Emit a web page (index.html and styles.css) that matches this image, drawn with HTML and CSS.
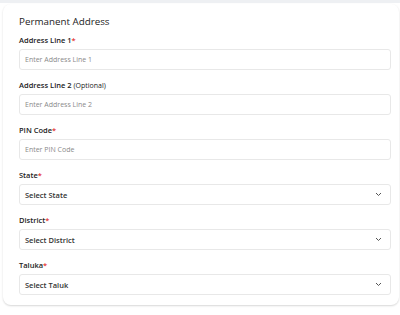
FILE: index.html
```html
<!DOCTYPE html>
<html>
<head>
<meta charset="utf-8">
<link rel="stylesheet" href="styles.css">
</head>
<body>
<div class="topbar"></div>
<div class="card">
  <div class="title">Permanent Address</div>
  <div class="field">
    <label class="label">Address Line 1<span class="req">*</span></label>
    <div class="input"><span class="ph">Enter Address Line 1</span></div>
  </div>
  <div class="field">
    <label class="label">Address Line 2 <span class="opt">(Optional)</span></label>
    <div class="input"><span class="ph">Enter Address Line 2</span></div>
  </div>
  <div class="field">
    <label class="label">PIN Code<span class="req">*</span></label>
    <div class="input"><span class="ph">Enter PIN Code</span></div>
  </div>
  <div class="field">
    <label class="label">State<span class="req">*</span></label>
    <div class="input select"><span class="val">Select State</span><svg class="chev" width="7" height="5" viewBox="0 0 7 5"><polyline points="1,1 3.5,3.5 6,1" fill="none" stroke="#555" stroke-width="1"/></svg></div>
  </div>
  <div class="field">
    <label class="label">District<span class="req">*</span></label>
    <div class="input select"><span class="val">Select District</span><svg class="chev" width="7" height="5" viewBox="0 0 7 5"><polyline points="1,1 3.5,3.5 6,1" fill="none" stroke="#555" stroke-width="1"/></svg></div>
  </div>
  <div class="field">
    <label class="label">Taluka<span class="req">*</span></label>
    <div class="input select"><span class="val">Select Taluk</span><svg class="chev" width="7" height="5" viewBox="0 0 7 5"><polyline points="1,1 3.5,3.5 6,1" fill="none" stroke="#555" stroke-width="1"/></svg></div>
  </div>
</div>
</body>
</html>
```
FILE: styles.css
```css
* { box-sizing: border-box; }
body {
  margin: 0;
  background: #ffffff;
  font-family: "Open Sans", "Noto Sans", sans-serif;
  color: #222;
  width: 400px;
  height: 315px;
  overflow: hidden;
}
.topbar {
  height: 3px;
  background: #eef0f3;
}
.card {
  margin: 1px 1px 0 3px;
  padding: 11px 8px 10px 16px;
  background: #fff;
  border-radius: 8px;
  box-shadow: 0 1px 2px rgba(0,0,0,0.16);
}
.title {
  font-size: 9.8px;
  line-height: 14px;
  font-weight: 500;
  color: #222;
  margin-bottom: 6px;
}
.field {
  display: flex;
  flex-direction: column;
  margin-bottom: 10px;
}
.field:last-child { margin-bottom: 0; }
.label {
  font-size: 7.5px;
  line-height: 11px;
  font-weight: 600;
  color: #222;
  margin-bottom: 3px;
}
.req { color: #e53935; }
.opt { font-weight: 400; font-size: 7px; }
.input {
  height: 21px;
  border: 1px solid #e8e8e8;
  border-radius: 3px;
  padding: 0 5px;
  display: flex;
  align-items: center;
  justify-content: space-between;
}
.ph {
  font-size: 7px;
  color: #8a8a8a;
}
.val {
  font-size: 7.5px;
  font-weight: 600;
  color: #333;
}
.chev { margin-right: 3px; }
```
